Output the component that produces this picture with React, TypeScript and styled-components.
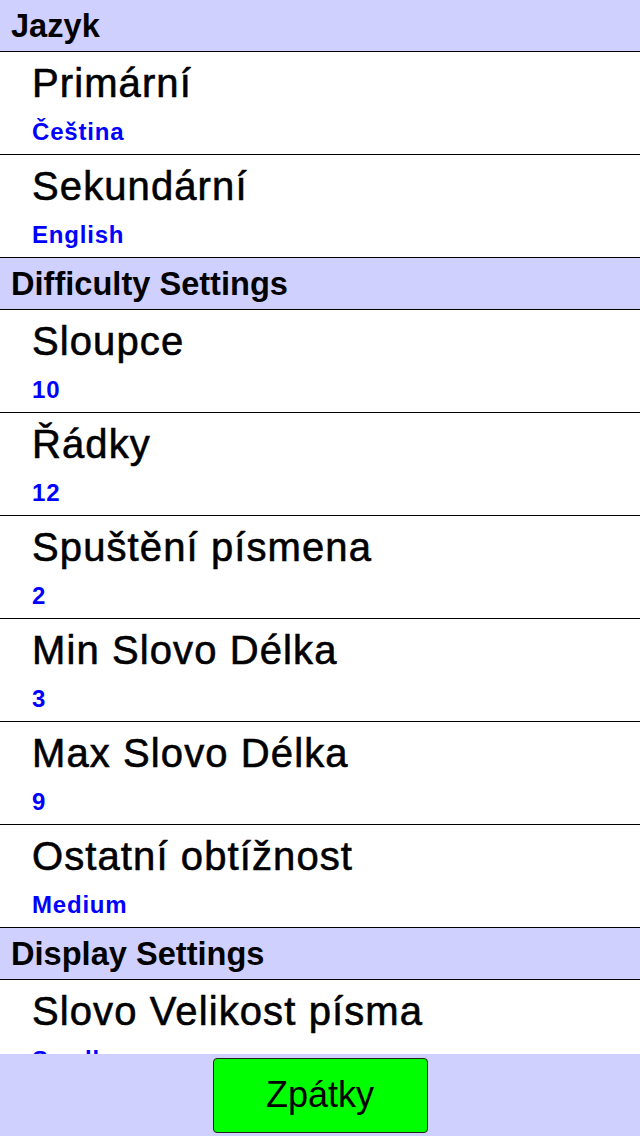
import * as React from 'react';
import styled, { createGlobalStyle } from 'styled-components';

const GlobalStyle = createGlobalStyle`
  html, body {
    margin: 0;
    padding: 0;
    background: #ffffff;
    font-family: "Liberation Sans", Arial, sans-serif;
  }
`;

const Screen = styled.div`
  display: flex;
  flex-direction: column;
  width: 640px;
  height: 1136px;
  overflow: hidden;
`;

const SettingsList = styled.div`
  flex: 1;
  overflow: hidden;
  background: #ffffff;
`;

const SectionHeader = styled.div`
  height: 51px;
  line-height: 51px;
  padding-left: 11px;
  background: #d0d0ff;
  border-bottom: 1px solid #000;
  font-size: 32.6px;
  font-weight: bold;
  color: #000;
`;

const Item = styled.div`
  display: flex;
  flex-direction: column;
  height: 103px;
  padding: 8px 0 0 32px;
  box-sizing: border-box;
  border-bottom: 1px solid #000;
`;

const ItemTitle = styled.div`
  font-size: 40px;
  line-height: 46px;
  letter-spacing: 1.1px;
  color: #000;
  -webkit-text-stroke: 0.6px #000;
`;

const ItemValue = styled.div`
  margin-top: 12px;
  font-size: 24px;
  line-height: 28px;
  font-weight: bold;
  letter-spacing: 0.8px;
  color: #0000ff;
`;

const Footer = styled.div`
  display: flex;
  justify-content: center;
  align-items: center;
  height: 82px;
  flex-shrink: 0;
  background: #d0d0ff;
`;

const BackButton = styled.button`
  width: 215px;
  height: 75px;
  background: #00ff00;
  border: 1px solid #222;
  border-radius: 4px;
  font-family: "Liberation Sans", Arial, sans-serif;
  font-size: 36px;
  color: #000;
  padding: 0;
`;

interface Setting {
  title: string;
  value: string;
}

interface Section {
  name: string;
  items: Setting[];
}

const sections: Section[] = [
  {
    name: 'Jazyk',
    items: [
      { title: 'Primární', value: 'Čeština' },
      { title: 'Sekundární', value: 'English' },
    ],
  },
  {
    name: 'Difficulty Settings',
    items: [
      { title: 'Sloupce', value: '10' },
      { title: 'Řádky', value: '12' },
      { title: 'Spuštění písmena', value: '2' },
      { title: 'Min Slovo Délka', value: '3' },
      { title: 'Max Slovo Délka', value: '9' },
      { title: 'Ostatní obtížnost', value: 'Medium' },
    ],
  },
  {
    name: 'Display Settings',
    items: [{ title: 'Slovo Velikost písma', value: 'Small' }],
  },
];

export default function App() {
  return (
    <>
      <GlobalStyle />
      <Screen>
        <SettingsList>
          {sections.map((section) => (
            <React.Fragment key={section.name}>
              <SectionHeader>{section.name}</SectionHeader>
              {section.items.map((item) => (
                <Item key={item.title}>
                  <ItemTitle>{item.title}</ItemTitle>
                  <ItemValue>{item.value}</ItemValue>
                </Item>
              ))}
            </React.Fragment>
          ))}
        </SettingsList>
        <Footer>
          <BackButton>Zpátky</BackButton>
        </Footer>
      </Screen>
    </>
  );
}
